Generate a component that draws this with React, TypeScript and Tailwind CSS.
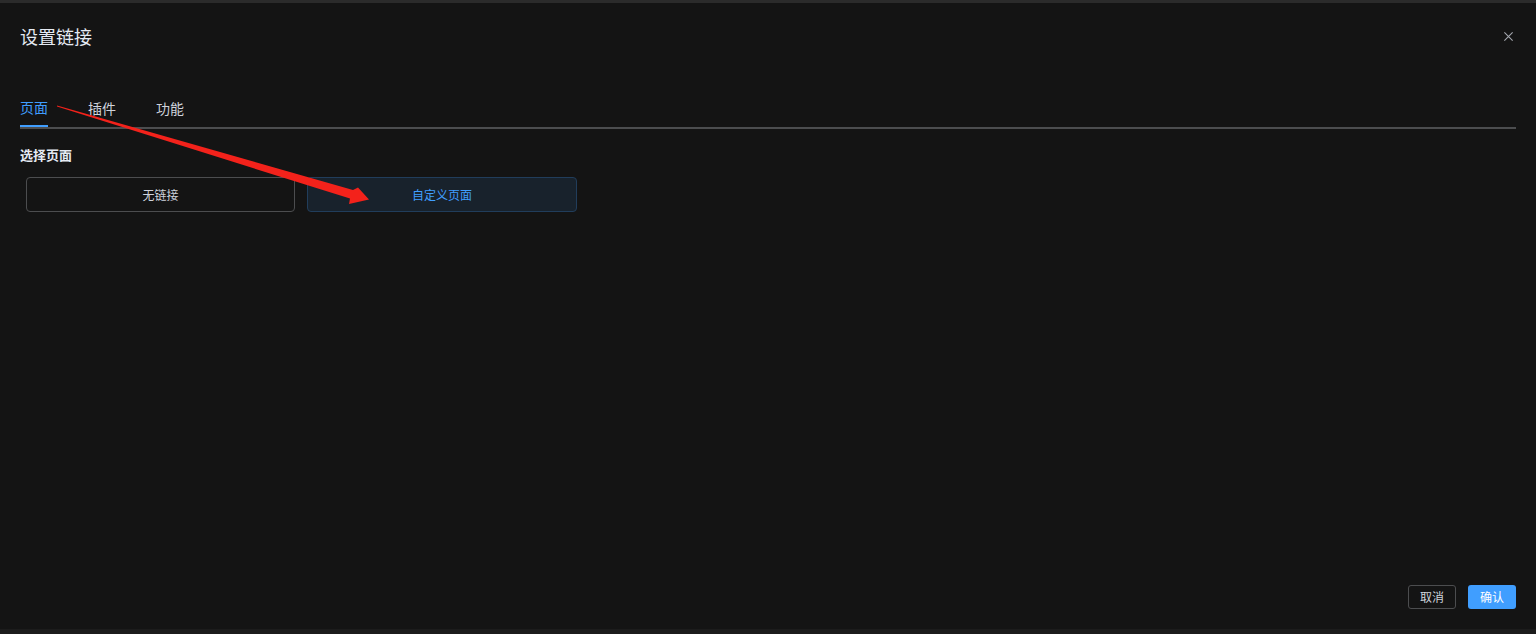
import React from 'react';

const font = { fontFamily: '"Noto Sans CJK SC", "Noto Sans", sans-serif' };

const tabs = ['页面', '插件', '功能'];

const App: React.FC = () => {
  return (
    <div className="relative flex flex-col h-[634px] w-full bg-[#141414] overflow-hidden" style={font}>
      <div className="h-[3px] bg-[#2b2b2b]" />

      <div className="flex-1 flex flex-col px-5 pb-5">
        {/* header */}
        <div className="flex items-center justify-between pt-[21px]">
          <h1 className="text-[18px] leading-6 text-[#e5eaf3]">设置链接</h1>
          <button className="text-[#a3a6ad] mr-[2px]">
            <svg width="11" height="11" viewBox="0 0 12 12" fill="none" stroke="currentColor" strokeWidth="1.2">
              <path d="M1.5 1.5l9 9M10.5 1.5l-9 9" />
            </svg>
          </button>
        </div>

        {/* tabs */}
        <div className="mt-10 flex gap-10 border-b-2 border-[#4c4d4f]">
          {tabs.map((t, i) => (
            <div
              key={t}
              className={
                i === 0
                  ? 'h-[39px] flex items-center text-[14px] text-[#409eff] border-b-2 border-[#409eff] -mb-[2px] pt-[2px]'
                  : 'h-[39px] flex items-center text-[14px] text-[#cfd3dc] pt-[2px]'
              }
            >
              {t}
            </div>
          ))}
        </div>

        {/* content */}
        <div className="mt-4 text-[13px] leading-5 font-bold text-[#e5eaf3]">选择页面</div>
        <div className="mt-3 ml-[6px] flex gap-3">
          <button className="w-[269px] h-[35px] rounded border border-[#4c4d4f] text-[12px] text-[#cfd3dc]">
            无链接
          </button>
          <button className="w-[270px] h-[35px] rounded border border-[#213d5b] bg-[#18222c] text-[12px] text-[#409eff]">
            自定义页面
          </button>
        </div>

        {/* footer */}
        <div className="mt-auto flex justify-end gap-3">
          <button className="w-12 h-6 rounded-[3px] border border-[#4c4d4f] text-[12px] text-[#cfd3dc]">取消</button>
          <button className="w-12 h-6 rounded-[3px] bg-[#409eff] text-[12px] text-white">确认</button>
        </div>
      </div>

      <div className="h-[5px] bg-[#1c1c1c]" />

      {/* annotation arrow */}
      <svg className="absolute inset-0 pointer-events-none" width="1536" height="634" viewBox="0 0 1536 634">
        <polygon
          points="57,105.4 353,190 358,187.5 369,199.5 349,204 350,198.5 57,106.6"
          fill="#f3221b"
        />
      </svg>
    </div>
  );
};

export default App;
